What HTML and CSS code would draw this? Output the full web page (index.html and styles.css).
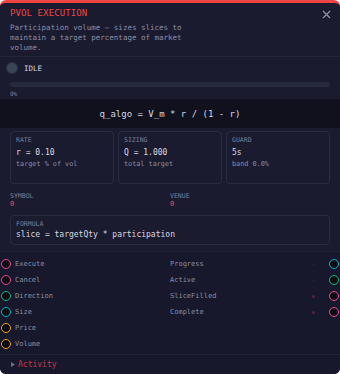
FILE: index.html
```html
<!DOCTYPE html>
<html>
<head>
<meta charset="utf-8">
<link rel="stylesheet" href="styles.css">
</head>
<body>
<div class="panel">
  <header class="head">
    <div class="title-row">
      <span class="title">PVOL EXECUTION</span>
      <svg class="close" width="9" height="9" viewBox="0 0 9 9"><path d="M1 1L8 8M8 1L1 8" stroke="#8a93a8" stroke-width="1.3"/></svg>
    </div>
    <p class="desc">Participation volume — sizes slices to maintain a target percentage of market volume.</p>
  </header>
  <section class="status">
    <div class="state"><span class="dot"></span><span class="state-txt">IDLE</span></div>
    <div class="bar"><div class="fill" style="width:0%"></div></div>
    <div class="pct">0%</div>
  </section>
  <div class="band">q_algo = V_m * r / (1 - r)</div>
  <div class="cards">
    <div class="card"><div class="lbl">RATE</div><div class="val">r = 0.10</div><div class="sub">target % of vol</div></div>
    <div class="card"><div class="lbl">SIZING</div><div class="val">Q = 1.000</div><div class="sub">total target</div></div>
    <div class="card"><div class="lbl">GUARD</div><div class="val">5s</div><div class="sub">band 0.0%</div></div>
  </div>
  <div class="fields">
    <div class="field"><div class="lbl">SYMBOL</div><div class="fval">0</div></div>
    <div class="field"><div class="lbl">VENUE</div><div class="fval">0</div></div>
  </div>
  <div class="formula">
    <div class="lbl">FORMULA</div>
    <div class="ftext">slice = targetQty * participation</div>
  </div>
  <div class="ports">
    <div class="col">
      <div class="port"><span class="h pink"></span><span>Execute</span></div>
      <div class="port"><span class="h pink"></span><span>Cancel</span></div>
      <div class="port"><span class="h green"></span><span>Direction</span></div>
      <div class="port"><span class="h cyan"></span><span>Size</span></div>
      <div class="port"><span class="h amber"></span><span>Price</span></div>
      <div class="port"><span class="h amber"></span><span>Volume</span></div>
    </div>
    <div class="col right">
      <div class="port"><span class="pl">Progress</span><span class="mini faint"></span><span class="h cyan"></span></div>
      <div class="port"><span class="pl">Active</span><span class="mini faint"></span><span class="h green"></span></div>
      <div class="port"><span class="pl">SliceFilled</span><span class="mini"></span><span class="h pink"></span></div>
      <div class="port"><span class="pl">Complete</span><span class="mini"></span><span class="h pink"></span></div>
    </div>
  </div>
  <div class="activity">
    <svg class="tri" width="4" height="5" viewBox="0 0 4 5"><path d="M0 0L4 2.5L0 5Z" fill="#6b7089"/></svg>
    <span class="act">Activity</span>
  </div>
</div>
</body>
</html>
```
FILE: styles.css
```css
* { box-sizing: border-box; margin: 0; padding: 0; }
html, body { background: #ffffff; }
body { margin: 0; }
.panel {
  width: 340px;
  height: 374px;
  background: #1b1b2f;
  border-top: 3px solid #ef4444;
  border-radius: 6px;
  overflow: hidden;
  font-family: "DejaVu Sans Mono", "Liberation Mono", monospace;
  color: #d4d6e4;
  display: flex;
  flex-direction: column;
}
.head {
  padding: 4px 10px 3px 10px;
  border-bottom: 1px solid #25263c;
}
.title-row { display: flex; justify-content: space-between; align-items: center; height: 12px; }
.title { color: #ef4444; font-size: 9px; letter-spacing: 0.1px; }
.close { margin-right: -1px; margin-top: 2px; }
.desc {
  margin-top: 4px;
  font-size: 7.5px;
  line-height: 10px;
  color: #8a8fa6;
  width: 182px;
}
.status { padding: 6px 10px 2px 10px; }
.state { display: flex; align-items: center; height: 10px; gap: 7px; margin-left: -3px; }
.dot {
  width: 10px; height: 10px; border-radius: 50%;
  background: #3a4556;
  box-shadow: 0 0 0 1px #2b3242;
}
.state-txt { font-size: 7.5px; color: #d0d3e0; }
.bar {
  margin-top: 9px;
  height: 5px;
  border-radius: 3px;
  background: #262a3d;
}
.fill { height: 100%; background: #ef4444; border-radius: 3px; }
.pct { margin-top: 3px; font-size: 6px; line-height: 7px; color: #7d8299; }
.band {
  height: 29px;
  background: #10111d;
  display: flex;
  align-items: center;
  justify-content: center;
  font-size: 9px;
  color: #d6d8e4;
}
.cards {
  display: grid;
  grid-template-columns: repeat(3, 1fr);
  gap: 4px;
  padding: 3px 10px 0 10px;
}
.card {
  height: 53px;
  border: 1px solid #2a2b45;
  border-radius: 4px;
  padding: 4px 5px 0 5px;
}
.lbl { font-size: 6.5px; line-height: 8px; color: #7b8098; }
.val { margin-top: 3px; font-size: 8px; line-height: 11px; color: #d6d8e4; }
.sub { margin-top: 1px; font-size: 6.8px; line-height: 10px; color: #8a8fa6; }
.fields {
  display: grid;
  grid-template-columns: 160px 1fr;
  padding: 8px 10px 0 10px;
}
.fval { font-size: 7px; line-height: 9px; color: #e0475a; }
.formula {
  margin: 6px 10px 0 10px;
  height: 30px;
  border: 1px solid #2a2b45;
  border-radius: 4px;
  padding: 4px 5px 0 5px;
}
.ftext { margin-top: 2px; font-size: 8px; line-height: 10px; color: #d6d8e4; }
.ports {
  margin-top: 6px;
  flex: 1;
  display: grid;
  grid-template-columns: 170px 170px;
  background: #17182b;
  border-top: 1px solid #1f2036;
  padding-top: 4px;
}
.col { display: flex; flex-direction: column; }
.port {
  height: 16px;
  display: flex;
  align-items: center;
  font-size: 7px;
  color: #8a8fa6;
  gap: 4px;
}
.col:first-child .port { padding-left: 1px; }
.right .port { gap: 0; }
.pl { flex: 1; }
.h {
  width: 10px; height: 10px; border-radius: 50%;
  background: #0b0b12;
  border: 1.6px solid;
  flex: none;
}
.right .h { margin-left: 14px; margin-right: 1px; }
.mini { width: 3px; height: 3px; border-radius: 50%; background: #5a2340; flex: none; }
.mini.faint { background: #1f2036; }
.pink { border-color: #ec4899; }
.green { border-color: #10b981; }
.cyan { border-color: #06b6d4; }
.amber { border-color: #f59e0b; }
.activity {
  height: 20px;
  background: #17182b;
  border-top: 1px solid #22233a;
  display: flex;
  align-items: center;
  padding-left: 11px;
  gap: 3px;
}
.tri { flex: none; }
.act { font-size: 8px; color: #c33a4c; }
```
